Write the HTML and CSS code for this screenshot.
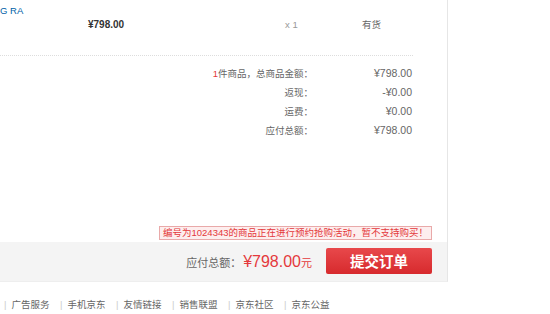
FILE: index.html
```html
<!DOCTYPE html>
<html lang="zh-CN">
<head>
<meta charset="utf-8">
<title>订单结算</title>
<link rel="stylesheet" href="styles.css">
</head>
<body>
<div class="order">
  <div class="item">
    <div class="item-name"><a href="#">G RA</a></div>
    <div class="item-price">¥798.00</div>
    <div class="item-qty">x 1</div>
    <div class="item-stock">有货</div>
  </div>
  <div class="summary">
    <div class="sum-row"><span class="sum-label"><em>1</em>件商品，总商品金额：</span><span class="sum-value">¥798.00</span></div>
    <div class="sum-row"><span class="sum-label">返现：</span><span class="sum-value">-¥0.00</span></div>
    <div class="sum-row"><span class="sum-label">运费：</span><span class="sum-value">¥0.00</span></div>
    <div class="sum-row"><span class="sum-label">应付总额：</span><span class="sum-value">¥798.00</span></div>
  </div>
  <div class="notice-wrap">
    <div class="notice">编号为1024343的商品正在进行预约抢购活动，暂不支持购买！</div>
  </div>
  <div class="bar">
    <div class="total">应付总额：<span class="total-price">¥798.00</span><span class="yuan">元</span></div>
    <button class="submit" type="button">提交订单</button>
  </div>
</div>
<div class="footer">
  <span class="sep">|</span><a href="#">广告服务</a>
  <span class="sep">|</span><a href="#">手机京东</a>
  <span class="sep">|</span><a href="#">友情链接</a>
  <span class="sep">|</span><a href="#">销售联盟</a>
  <span class="sep">|</span><a href="#">京东社区</a>
  <span class="sep">|</span><a href="#">京东公益</a>
</div>
</body>
</html>
```
FILE: styles.css
```css
html, body {
  margin: 0;
  padding: 0;
  background: #fff;
}
body {
  font-family: "Liberation Sans", "Noto Sans CJK SC", sans-serif;
  font-size: 9.5px;
  color: #666;
}
a {
  text-decoration: none;
}
.order {
  width: 447px;
  border-right: 1px solid #e6e6e6;
  border-bottom: 1px solid #eee;
}
.item {
  width: 413px;
  height: 55px;
  border-bottom: 1px dotted #ddd;
  display: grid;
  grid-template-columns: 88px 197px 77px 1fr;
  align-items: start;
}
.item-name {
  padding-top: 5px;
  line-height: 12px;
}
.item-name a {
  color: #005ea7;
}
.item-price,
.item-qty,
.item-stock {
  padding-top: 19px;
  line-height: 12px;
}
.item-price {
  font-weight: bold;
  color: #333;
  font-size: 10px;
}
.item-qty {
  color: #999;
}
.item-stock {
  color: #666;
}
.summary {
  padding-top: 8px;
}
.sum-row {
  display: flex;
  justify-content: flex-end;
  padding-right: 35px;
  height: 19px;
  line-height: 19px;
}
.sum-label {
  text-align: right;
}
.sum-label em {
  font-style: normal;
  color: #e4393c;
}
.sum-value {
  width: 99px;
  text-align: right;
  font-size: 10.5px;
}
.notice-wrap {
  display: flex;
  justify-content: flex-end;
  padding-right: 15px;
  margin-top: 86px;
  margin-bottom: 2px;
}
.notice {
  background: #fdeeee;
  border: 1px solid #e9a9a9;
  color: #e4393c;
  line-height: 12px;
  padding: 0 3px;
}
.bar {
  background: #f4f4f4;
  height: 39px;
  display: flex;
  align-items: center;
  justify-content: flex-end;
  padding-right: 15px;
}
.total {
  font-size: 11px;
  color: #666;
  display: flex;
  align-items: baseline;
  margin-right: 14px;
}
.total-price {
  color: #e4393c;
  font-size: 16px;
  margin-left: 2px;
}
.yuan {
  color: #e4393c;
  font-size: 11px;
}
.submit {
  width: 106px;
  height: 26px;
  border: 0;
  border-radius: 2px;
  background: linear-gradient(#e8484b, #d72a2d);
  color: #fff;
  font-family: "Noto Sans CJK SC", sans-serif;
  font-size: 14.5px;
  font-weight: bold;
  padding: 0;
  margin-top: -2px;
}
.footer {
  display: flex;
  align-items: center;
  padding-left: 4px;
  margin-top: 17px;
  line-height: 12px;
}
.footer .sep {
  color: #ccc;
  margin-right: 5px;
}
.footer a {
  color: #666;
  margin-right: 10.5px;
}
```
